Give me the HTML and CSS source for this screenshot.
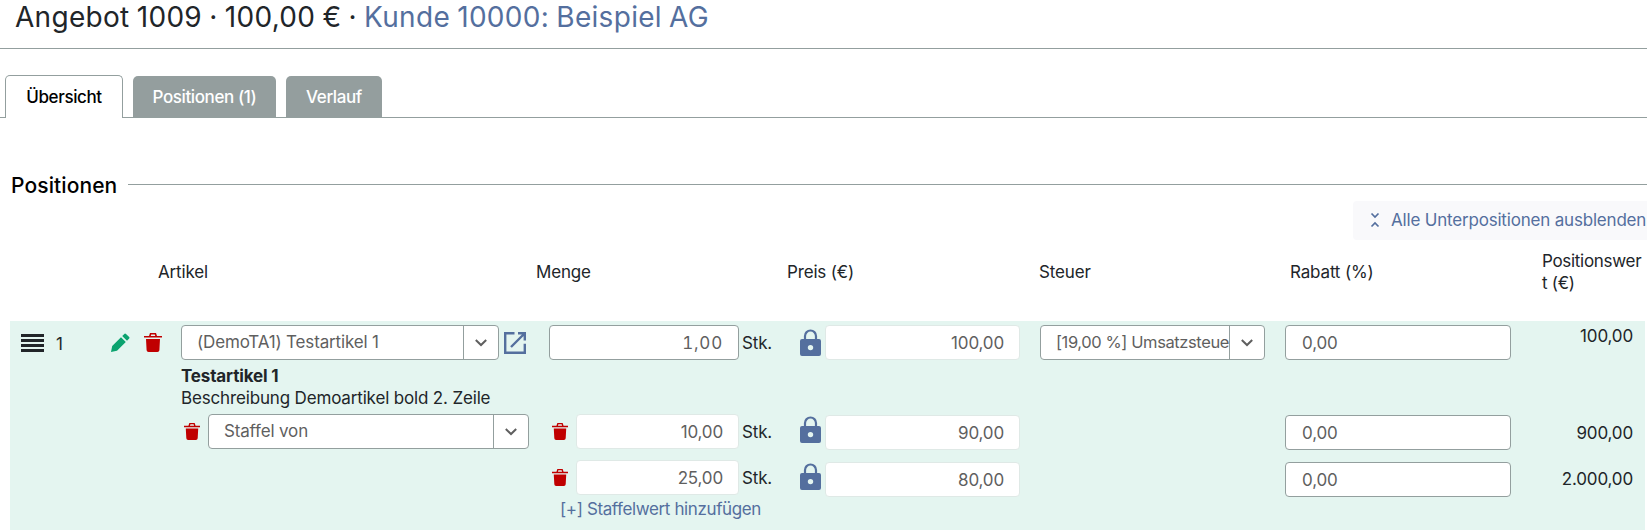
FILE: index.html
```html
<!DOCTYPE html>
<html lang="de">
<head>
    <meta charset="UTF-8">
    <meta name="viewport" content="width=device-width, initial-scale=1.0">
    <title>Angebot 1009</title>
    <link rel="stylesheet" href="styles.css">
</head>
<body>
    <!-- Shared icons -->
    <svg class="sprite" width="0" height="0">
        <symbol id="trash" viewBox="0 0 18 19">
            <path d="M0 3h5l1-3h6l1 3h5v1.600H0zM6.700 3h4.600l-.5-1.600H7.200z"/>
            <path d="M2 6h14l-.6 11.200a2 2 0 0 1-2 1.800H4.600a2 2 0 0 1-2-1.800z"/>
        </symbol>
        <symbol id="lock" viewBox="0 0 21 28">
            <path d="M5 11V7a5.500 5.500 0 0 1 11 0v4" fill="none" stroke="currentColor" stroke-width="2.200"/>
            <path fill-rule="evenodd" d="M2 10h17a2 2 0 0 1 2 2v13a2 2 0 0 1-2 2H2a2 2 0 0 1-2-2V12a2 2 0 0 1 2-2zm8.500 5.900a2.700 2.700 0 1 0 0 5.400 2.700 2.700 0 0 0 0-5.400z"/>
        </symbol>
        <symbol id="chevron" viewBox="0 0 12 8">
            <path d="M.8 1L6 6l5.200-5" fill="none" stroke="currentColor" stroke-width="2"/>
        </symbol>
    </svg>

    <header class="page-header">
        <h1>Angebot 1009 · 100,00 € · <a href="#">Kunde 10000: Beispiel AG</a></h1>
    </header>

    <nav class="tabs">
        <a class="tab active" href="#">Übersicht</a>
        <a class="tab tab-positions" href="#">Positionen (1)</a>
        <a class="tab tab-history" href="#">Verlauf</a>
    </nav>

    <div class="section-title">
        <h2>Positionen</h2>
    </div>

    <div class="toolbar">
        <button class="toggle-all">
            <svg width="10" height="16" viewBox="0 0 10 16"><path d="M1.500 1.500L5 5l3.500-3.500M1.500 14.500L5 11l3.500 3.500" fill="none" stroke="currentColor" stroke-width="1.700"/></svg>
            <span>Alle Unterpositionen ausblenden</span>
        </button>
    </div>

    <div class="table-head">
        <div>Artikel</div>
        <div>Menge</div>
        <div>Preis (€)</div>
        <div>Steuer</div>
        <div>Rabatt (%)</div>
        <div class="head-value">Positionswert (€)</div>
    </div>

    <div class="position">
        <div class="col-handle">
            <span class="handle"></span>
            <span class="number">1</span>
            <svg class="icon-edit" width="20" height="20" viewBox="0 0 20 20"><path d="M1 19l1.200-6L11 4.200l4.800 4.800L7 17.800zM12.200 3L14.600.700q.7-.5 1.400.2l3.200 3.200q.6.700 0 1.400L17 7.800z"/></svg>
            <svg class="icon-trash"><use href="#trash"/></svg>
        </div>

        <div class="col-article">
            <div class="line">
                <div class="select select-article"><span>(DemoTA1) Testartikel 1</span><i><svg><use href="#chevron"/></svg></i></div>
                <svg class="icon-open" width="24" height="24" viewBox="0 0 24 24"><path d="M11.500 2.200H2.200v19.600h19.600v-9M15 2.200h6.800v7.300M21.500 2.500L8 16" fill="none" stroke="currentColor" stroke-width="2.400"/></svg>
            </div>
            <div class="description"><b>Testartikel 1</b><br>Beschreibung Demoartikel bold 2. Zeile</div>
            <div class="line line-scale">
                <svg class="icon-trash small"><use href="#trash"/></svg>
                <div class="select select-scale"><span>Staffel von</span><i><svg><use href="#chevron"/></svg></i></div>
            </div>
        </div>

        <div class="col-quantity">
            <div class="line main-line"><input class="right tabular" type="text" value="1,00"><span class="unit">Stk.</span></div>
            <div class="line"><svg class="icon-trash small"><use href="#trash"/></svg><input class="right locked" type="text" value="10,00"><span class="unit">Stk.</span></div>
            <div class="line"><svg class="icon-trash small"><use href="#trash"/></svg><input class="right locked" type="text" value="25,00"><span class="unit">Stk.</span></div>
            <a class="add-scale" href="#">[+] Staffelwert hinzufügen</a>
        </div>

        <div class="col-price">
            <div class="line main-line"><svg class="icon-lock"><use href="#lock"/></svg><input class="right locked" type="text" value="100,00"></div>
            <div class="line"><svg class="icon-lock"><use href="#lock"/></svg><input class="right locked" type="text" value="90,00"></div>
            <div class="line"><svg class="icon-lock"><use href="#lock"/></svg><input class="right locked" type="text" value="80,00"></div>
        </div>

        <div class="col-tax">
            <div class="select select-tax"><span>[19,00 %] Umsatzsteue</span><i><svg><use href="#chevron"/></svg></i></div>
        </div>

        <div class="col-discount">
            <div class="line main-line"><input type="text" value="0,00"></div>
            <div class="line"><input type="text" value="0,00"></div>
            <div class="line"><input type="text" value="0,00"></div>
        </div>

        <div class="col-value">
            <div class="main-line">100,00</div>
            <div>900,00</div>
            <div>2.000,00</div>
        </div>
    </div>
</body>
</html>
```
FILE: styles.css
```css
* {
    box-sizing: border-box;
}

body {
    margin: 0;
    height: 530px;
    overflow: hidden;
    font-family: Inter, "Liberation Sans", sans-serif;
    font-size: 17px;
    line-height: 22px;
    letter-spacing: -0.16px;
    color: #212529;
    background-color: #fff;
}

a {
    color: #546f9e;
    text-decoration: none;
}

svg {
    fill: currentColor;
    flex: none;
}

.sprite {
    display: block;
    height: 0;
}

/* Header */
.page-header {
    height: 49px;
    padding-left: 15px;
    border-bottom: 1px solid #939f9e;
}

h1 {
    margin: 0;
    font-size: 28px;
    line-height: 34px;
    font-weight: 400;
    letter-spacing: 0.3px;
    word-spacing: -1px;
}

/* Tabs */
.tabs {
    display: flex;
    align-items: flex-end;
    gap: 10px;
    height: 69px;
    padding-left: 5px;
    border-bottom: 1px solid #939f9e;
}

.tab {
    height: 41px;
    line-height: 43px;
    text-align: center;
    font-weight: 500;
    letter-spacing: -0.4px;
    color: #fff;
    background-color: #949e9e;
    border-radius: 5px 5px 0 0;
}

.tab.active {
    width: 118px;
    height: 43px;
    margin-bottom: -1px;
    color: #000;
    background-color: #fff;
    border: 1px solid #939f9e;
    border-bottom: none;
}

.tab-positions {
    width: 143px;
}

.tab-history {
    width: 96px;
}

/* Section heading */
.section-title {
    display: flex;
    align-items: center;
    gap: 11px;
    margin-top: 53px;
    padding-left: 11px;
    height: 26px;
}

.section-title::after {
    content: "";
    flex: 1;
    height: 1px;
    background-color: #939f9e;
}

h2 {
    margin: 3px 0 0;
    width: 106px;
    font-size: 21px;
    font-weight: 500;
    letter-spacing: 0.1px;
    color: #000;
    white-space: nowrap;
}

.toolbar {
    display: flex;
    justify-content: flex-end;
    margin-top: 4px;
}

.toggle-all {
    display: flex;
    align-items: center;
    width: 294px;
    height: 39px;
    padding: 0 0 1px 17px;
    gap: 11px;
    font: inherit;
    letter-spacing: -0.19px;
    white-space: nowrap;
    color: #546f9e;
    background-color: #f9f9fb;
    border: none;
    border-radius: 4px 0 0 4px;
}

/* Table */
.table-head {
    display: grid;
    grid-template-columns: 378px 251px 252px 251px 252px 105px;
    align-items: center;
    height: 64px;
    margin: 0 0 17px 158px;
}

.head-value {
    width: 101px;
    letter-spacing: -0.3px;
    word-break: break-all;
}

.position {
    display: grid;
    grid-template-columns: 171px 368px 251px 240px 245px 226px 134px;
    height: 209px;
    width: 1635px;
    margin-left: 10px;
    padding-top: 4px;
    background-color: #e4f5f0;
}

.line {
    display: flex;
    align-items: center;
    height: 35px;
}

.main-line {
    margin-bottom: 55px;
}

.col-handle {
    display: flex;
    align-items: center;
    height: 35px;
    padding-left: 11px;
}

.handle {
    width: 23px;
    height: 18px;
    background: repeating-linear-gradient(#212529 0 2.6px, transparent 2.6px 5.1px);
}

.number {
    width: 10px;
    margin: 2px 44px 0 12px;
}

.icon-edit {
    color: #0ba36f;
}

.icon-trash {
    width: 18px;
    height: 19px;
    margin-left: 14px;
    color: #c00000;
}

.icon-trash.small {
    width: 16px;
    height: 17px;
    margin: 0 8px 0 3px;
}

input {
    min-width: 0;
    width: 100%;
    height: 35px;
    padding: 1px 15px 0 16px;
    font: inherit;
    letter-spacing: inherit;
    color: #5f5f5f;
    background-color: #fff;
    border: 1px solid #939f9e;
    border-radius: 4px;
}

.right {
    text-align: right;
}

.locked {
    border-color: #dfe9e6;
}

.tabular {
    font-variant-numeric: tabular-nums;
    letter-spacing: 0.8px;
}

.select {
    display: flex;
    height: 35px;
    color: #5f5f5f;
    background-color: #fff;
    border: 1px solid #939f9e;
    border-radius: 4px;
}

.select span {
    flex: 1;
    padding-left: 15px;
    line-height: 32px;
    white-space: nowrap;
    overflow: hidden;
}

.select i {
    display: flex;
    align-items: center;
    justify-content: center;
    width: 35px;
    border-left: 1px solid #939f9e;
}

.select i svg {
    width: 12px;
    height: 8px;
}

.select-article {
    width: 318px;
}

.select-scale {
    width: 321px;
}

.select-tax {
    width: 225px;
    font-size: 16.5px;
    letter-spacing: -0.4px;
}

.icon-open {
    margin-left: 4px;
    color: #546f9e;
}

.description {
    height: 54px;
    padding-top: 5px;
    white-space: nowrap;
}

.col-quantity .line {
    width: 193px;
}

.unit {
    width: 0;
    padding-left: 3px;
    white-space: nowrap;
}

.col-quantity .main-line {
    margin-bottom: 54px;
}

.col-quantity .line + .line + .line {
    margin-top: 11px;
}

.add-scale {
    display: block;
    margin: 3px 0 0 11px;
    letter-spacing: -0.38px;
    white-space: nowrap;
}

.col-price .line {
    width: 220px;
}

.icon-lock {
    width: 21px;
    height: 28px;
    margin: 0 4px 0 0;
    color: #546f9e;
}

/* Scale rows have the lock slightly above the middle */
.col-price .line + .line .icon-lock {
    margin-top: -5px;
}

.col-price .line + .line + .line,
.col-discount .line + .line + .line {
    margin-top: 12px;
}

.col-value {
    padding-right: 12px;
    text-align: right;
}

.col-value .main-line {
    margin-bottom: 75px;
}

.col-value div + div + div {
    margin-top: 24px;
}
```
